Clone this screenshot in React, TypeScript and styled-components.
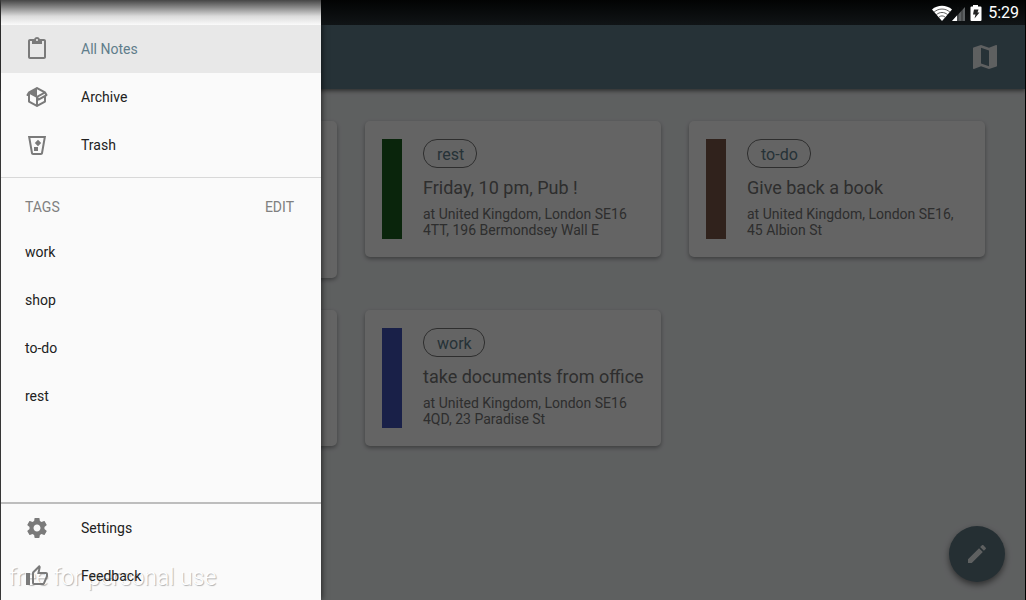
import React from "react";
import styled, { createGlobalStyle } from "styled-components";

const GlobalStyle = createGlobalStyle`
  *, *::before, *::after { box-sizing: border-box; }
  body { margin: 0; background: #000; font-family: Roboto, "Liberation Sans", sans-serif; }
  button { font: inherit; border: 0; padding: 0; background: none; cursor: pointer; }
  ul, h2, p { margin: 0; padding: 0; font-weight: 400; list-style: none; }
`;

const Shell = styled.div`
  position: relative;
  min-height: 100vh;
  display: flex;
  flex-direction: column;
  background: #eceff1;
  border-left: 1px solid #444;
  border-right: 1px solid #000;
`;

const Toolbar = styled.header`
  display: flex;
  align-items: center;
  justify-content: flex-end;
  height: 89px;
  padding: 25px 24px 0;
  background: #607d8b;
  color: #eceff1;
  box-shadow: 0 2px 4px rgba(0, 0, 0, 0.5);

  button { display: flex; color: inherit; }
`;

const Notes = styled.main`
  flex: 1;
  display: grid;
  grid-template-columns: repeat(3, 1fr);
  align-items: start;
  align-content: start;
  gap: 32px 28px;
  padding: 32px 40px;
`;

const Card = styled.article<{ $tall?: boolean }>`
  display: flex;
  gap: 21px;
  min-height: ${(p) => (p.$tall ? 157 : 136)}px;
  padding: 18px 17px;
  border-radius: 5px;
  background: #fafafa;
  box-shadow: 0 2px 4px rgba(0, 0, 0, 0.35);
`;

const Stripe = styled.div<{ $color: string }>`
  flex: none;
  width: 20px;
  height: 100px;
  background: ${(p) => p.$color};
`;

const Body = styled.div`
  display: flex;
  flex-direction: column;
  align-items: flex-start;
  min-width: 0;
  color: #737373;
`;

const Tag = styled.span`
  height: 29px;
  padding: 0 12px 0 13px;
  border: 1px solid #737373;
  border-radius: 14px;
  color: #607d8b;
  font-size: 16px;
  line-height: 29px;
`;

const Title = styled.h2`
  margin: 9px 0 7px;
  font-size: 18px;
  line-height: 22px;
  white-space: nowrap;
`;

const Address = styled.p`
  font-size: 14px;
  line-height: 16px;
  width: 210px;
`;

const Fab = styled.button`
  position: absolute;
  right: 20px;
  bottom: 18px;
  display: flex;
  align-items: center;
  justify-content: center;
  width: 56px;
  height: 56px;
  border-radius: 50%;
  background: #5c7580;
  color: #eceff1;
  box-shadow: 0 3px 6px rgba(0, 0, 0, 0.5);
`;

const Scrim = styled.div`
  position: absolute;
  inset: 0;
  background: rgba(0, 0, 0, 0.6);
`;

const Drawer = styled.nav`
  position: absolute;
  inset: 0 auto 0 0;
  display: flex;
  flex-direction: column;
  width: 320px;
  padding-top: 25px;
  background: #fafafa;
  box-shadow: 1px 0 6px rgba(0, 0, 0, 0.6);
`;

const Item = styled.button<{ $active?: boolean }>`
  display: flex;
  align-items: center;
  gap: 32px;
  width: 100%;
  height: 48px;
  padding: 0 24px;
  background: ${(p) => (p.$active ? "#e8e8e8" : "transparent")};
  color: ${(p) => (p.$active ? "#607d8b" : "#212121")};
  font-size: 14px;
  text-align: left;

  svg { color: #7a7a7a; }
`;

const TagsHeader = styled.div`
  display: flex;
  align-items: center;
  justify-content: space-between;
  height: 51px;
  margin-top: 8px;
  padding: 8px 27px 0 24px;
  border-top: 1px solid #d8d8d8;
  color: #808080;
  font-size: 14px;

  h2 { font-size: 14px; }
  button { color: inherit; }
`;

const Footer = styled.div`
  position: relative;
  margin-top: auto;
  border-top: 2px solid #bdbdbd;
`;

const StatusBar = styled.div`
  position: absolute;
  inset: 0 0 auto 0;
  display: flex;
  align-items: center;
  justify-content: flex-end;
  height: 25px;
  padding-right: 6px;
  color: #fff;
  font-size: 16px;
`;

const StatusShade = styled.div<{ $drawer?: boolean }>`
  position: absolute;
  top: 0;
  left: ${(p) => (p.$drawer ? "0" : "320px")};
  right: ${(p) => (p.$drawer ? "auto" : "0")};
  width: ${(p) => (p.$drawer ? "320px" : "auto")};
  height: 25px;
  background: ${(p) =>
    p.$drawer
      ? "linear-gradient(rgba(0,0,0,.72), rgba(0,0,0,.45) 30%, rgba(0,0,0,.12) 65%, rgba(0,0,0,0))"
      : "linear-gradient(#020303, #101416)"};
`;

const StatusIcons = styled.span`
  display: flex;
  margin-right: 6px;
`;

const Watermark = styled.div`
  position: absolute;
  left: 8px;
  bottom: 6px;
  color: #fff;
  font-size: 23px;
  font-weight: 300;
  line-height: 32px;
  white-space: nowrap;
  text-shadow: 1px 1px 1px rgba(0, 0, 0, 0.3);
  pointer-events: none;
`;

const paths = {
  clipboard:
    "M19 2h-4.18C14.4.84 13.3 0 12 0c-1.3 0-2.4.84-2.82 2H5c-1.1 0-2 .9-2 2v16c0 1.1.9 2 2 2h14c1.1 0 2-.9 2-2V4c0-1.1-.9-2-2-2zm-7 0c.55 0 1 .45 1 1s-.45 1-1 1-1-.45-1-1 .45-1 1-1zm7 18H5V4h2v3h10V4h2v16z",
  box: "M2,10.96C1.5,10.68 1.35,10.07 1.63,9.59L3.13,7C3.24,6.8 3.41,6.66 3.6,6.58L11.43,2.18C11.59,2.06 11.79,2 12,2C12.21,2 12.41,2.06 12.57,2.18L20.47,6.62C20.66,6.72 20.82,6.88 20.91,7.08L22.36,9.6C22.64,10.08 22.47,10.69 22,10.96L21,11.54V16.5C21,16.88 20.79,17.21 20.47,17.38L12.57,21.82C12.41,21.94 12.21,22 12,22C11.79,22 11.59,21.94 11.43,21.82L3.53,17.38C3.21,17.21 3,16.88 3,16.5V10.96C2.7,11.13 2.32,11.14 2,10.96M12,4.15V4.15L12,10.85V10.85L17.96,7.5L12,4.15M5,15.91L11,19.29V12.58L5,9.21V15.91M19,15.91V12.69L14,15.59C13.67,15.77 13.3,15.76 13,15.6V19.29L19,15.91M13.85,13.36L20.13,9.73L19.55,8.72L13.27,12.35L13.85,13.36Z",
  bin: "M21.03,3L18,20.31C17.83,21.27 17,22 16,22H8C7,22 6.17,21.27 6,20.31L2.97,3H21.03M5.36,5L8,20H16L18.64,5H5.36M9,18V14H13V18H9M13,13.18L9.82,10L13,6.82L16.18,10L13,13.18Z",
  gear: "M19.43 12.98c.04-.32.07-.64.07-.98s-.03-.66-.07-.98l2.11-1.65c.19-.15.24-.42.12-.64l-2-3.46c-.12-.22-.39-.3-.61-.22l-2.49 1c-.52-.4-1.08-.73-1.69-.98l-.38-2.65C14.46 2.18 14.25 2 14 2h-4c-.25 0-.46.18-.49.42l-.38 2.65c-.61.25-1.17.59-1.69.98l-2.49-1c-.23-.09-.49 0-.61.22l-2 3.46c-.13.22-.07.49.12.64l2.11 1.65c-.04.32-.07.65-.07.98s.03.66.07.98l-2.11 1.65c-.19.15-.24.42-.12.64l2 3.46c.12.22.39.3.61.22l2.49-1c.52.4 1.08.73 1.69.98l.38 2.65c.03.24.24.42.49.42h4c.25 0 .46-.18.49-.42l.38-2.65c.61-.25 1.17-.59 1.69-.98l2.49 1c.23.09.49 0 .61-.22l2-3.46c.12-.22.07-.49-.12-.64l-2.11-1.65zM12 15.5c-1.93 0-3.5-1.57-3.5-3.5s1.57-3.5 3.5-3.5 3.5 1.57 3.5 3.5-1.57 3.5-3.5 3.5z",
  thumb:
    "M5,9V21H1V9H5M9,21A2,2 0 0,1 7,19V9C7,8.45 7.22,7.95 7.59,7.59L14.17,1L15.23,2.06C15.5,2.33 15.67,2.7 15.67,3.11L15.64,3.43L14.69,8H21C22.11,8 23,8.9 23,10V12C23,12.26 22.95,12.5 22.86,12.73L19.84,19.78C19.54,20.5 18.83,21 18,21H9M9,19H18.03L21,12V10H12.21L13.34,4.68L9,9.03V19Z",
  map: "M15,19L9,16.89V5L15,7.11M20.5,3C20.44,3 20.39,3 20.34,3L15,5.1L9,3L3.36,4.9C3.15,4.97 3,5.15 3,5.38V20.5A0.5,0.5 0 0,0 3.5,21C3.55,21 3.61,21 3.66,20.97L9,18.9L15,21L20.64,19.1C20.85,19 21,18.85 21,18.62V3.5A0.5,0.5 0 0,0 20.5,3Z",
  pencil:
    "M3 17.25V21h3.75L17.81 9.94l-3.75-3.75L3 17.25zM20.71 7.04c.39-.39.39-1.02 0-1.41l-2.34-2.34c-.39-.39-1.02-.39-1.41 0l-1.83 1.83 3.75 3.75 1.83-1.83z",
};

const Icon = ({ name, size = 24 }: { name: keyof typeof paths; size?: number }) => (
  <svg width={size} height={size} viewBox="0 0 24 24" fill="currentColor" aria-hidden="true">
    <path d={paths[name]} />
  </svg>
);

type Note = { tag: string; title: string; address: string; color: string };

const NoteCard = ({ tag, title, address, color }: Note) => (
  <Card>
    <Stripe $color={color} />
    <Body>
      <Tag>{tag}</Tag>
      <Title>{title}</Title>
      <Address>{address}</Address>
    </Body>
  </Card>
);

const tags = ["work", "shop", "to-do", "rest"];

export default function App() {
  return (
    <Shell>
      <GlobalStyle />
      <Toolbar>
        <button aria-label="Map"><Icon name="map" size={32} /></button>
      </Toolbar>
      <Notes>
        <Card $tall />
        <NoteCard tag="rest" title="Friday, 10 pm, Pub !" address="at United Kingdom, London SE16 4TT, 196 Bermondsey Wall E" color="#1b5e20" />
        <NoteCard tag="to-do" title="Give back a book" address="at United Kingdom, London SE16, 45 Albion St" color="#795548" />
        <Card />
        <NoteCard tag="work" title="take documents from office" address="at United Kingdom, London SE16 4QD, 23 Paradise St" color="#3f51b5" />
      </Notes>
      <Fab aria-label="New note"><Icon name="pencil" /></Fab>
      <Scrim />
      <Drawer>
        <Item $active><Icon name="clipboard" />All Notes</Item>
        <Item><Icon name="box" />Archive</Item>
        <Item><Icon name="bin" />Trash</Item>
        <TagsHeader>
          <h2>TAGS</h2>
          <button>EDIT</button>
        </TagsHeader>
        <ul>
          {tags.map((t) => (
            <li key={t}><Item>{t}</Item></li>
          ))}
        </ul>
        <Watermark>free for personal use</Watermark>
        <Footer>
          <Item><Icon name="gear" />Settings</Item>
          <Item><Icon name="thumb" />Feedback</Item>
        </Footer>
      </Drawer>
      <StatusShade />
      <StatusShade $drawer />
      <StatusBar>
        <StatusIcons>
          <svg width="50" height="18" viewBox="0 0 50 18" aria-hidden="true">
            <path d="M0 5.5C5.5.5 14.5.5 20 5.5L10 17z" fill="#fff" />
            <path
              d="M2 8.2C6.5 4 13.5 4 18 8.2M4.3 10.8C7.5 7.7 12.5 7.7 15.7 10.8M6.7 13.3C8.6 11.4 11.4 11.4 13.3 13.3"
              fill="none"
              stroke="#333"
              strokeWidth="0.8"
            />
            <path d="M20 17L33 3V17z" fill="#5d6163" />
            <path d="M20 17L25 11.5V17z" fill="#fff" />
            <path d="M26 3V17M30 3V17" stroke="#111" strokeWidth="0.6" />
            <path d="M41 1h5v1.5h2.500a1 1 0 0 1 1 1V16a1 1 0 0 1-1 1h-9a1 1 0 0 1-1-1V3.500a1 1 0 0 1 1-1H41z" fill="#fff" />
            <path d="M42 5.500h4.500L45.500 8.500h2L42.500 14.500L43.500 10.500H41z" fill="#222" />
          </svg>
        </StatusIcons>
        5:29
      </StatusBar>
    </Shell>
  );
}
